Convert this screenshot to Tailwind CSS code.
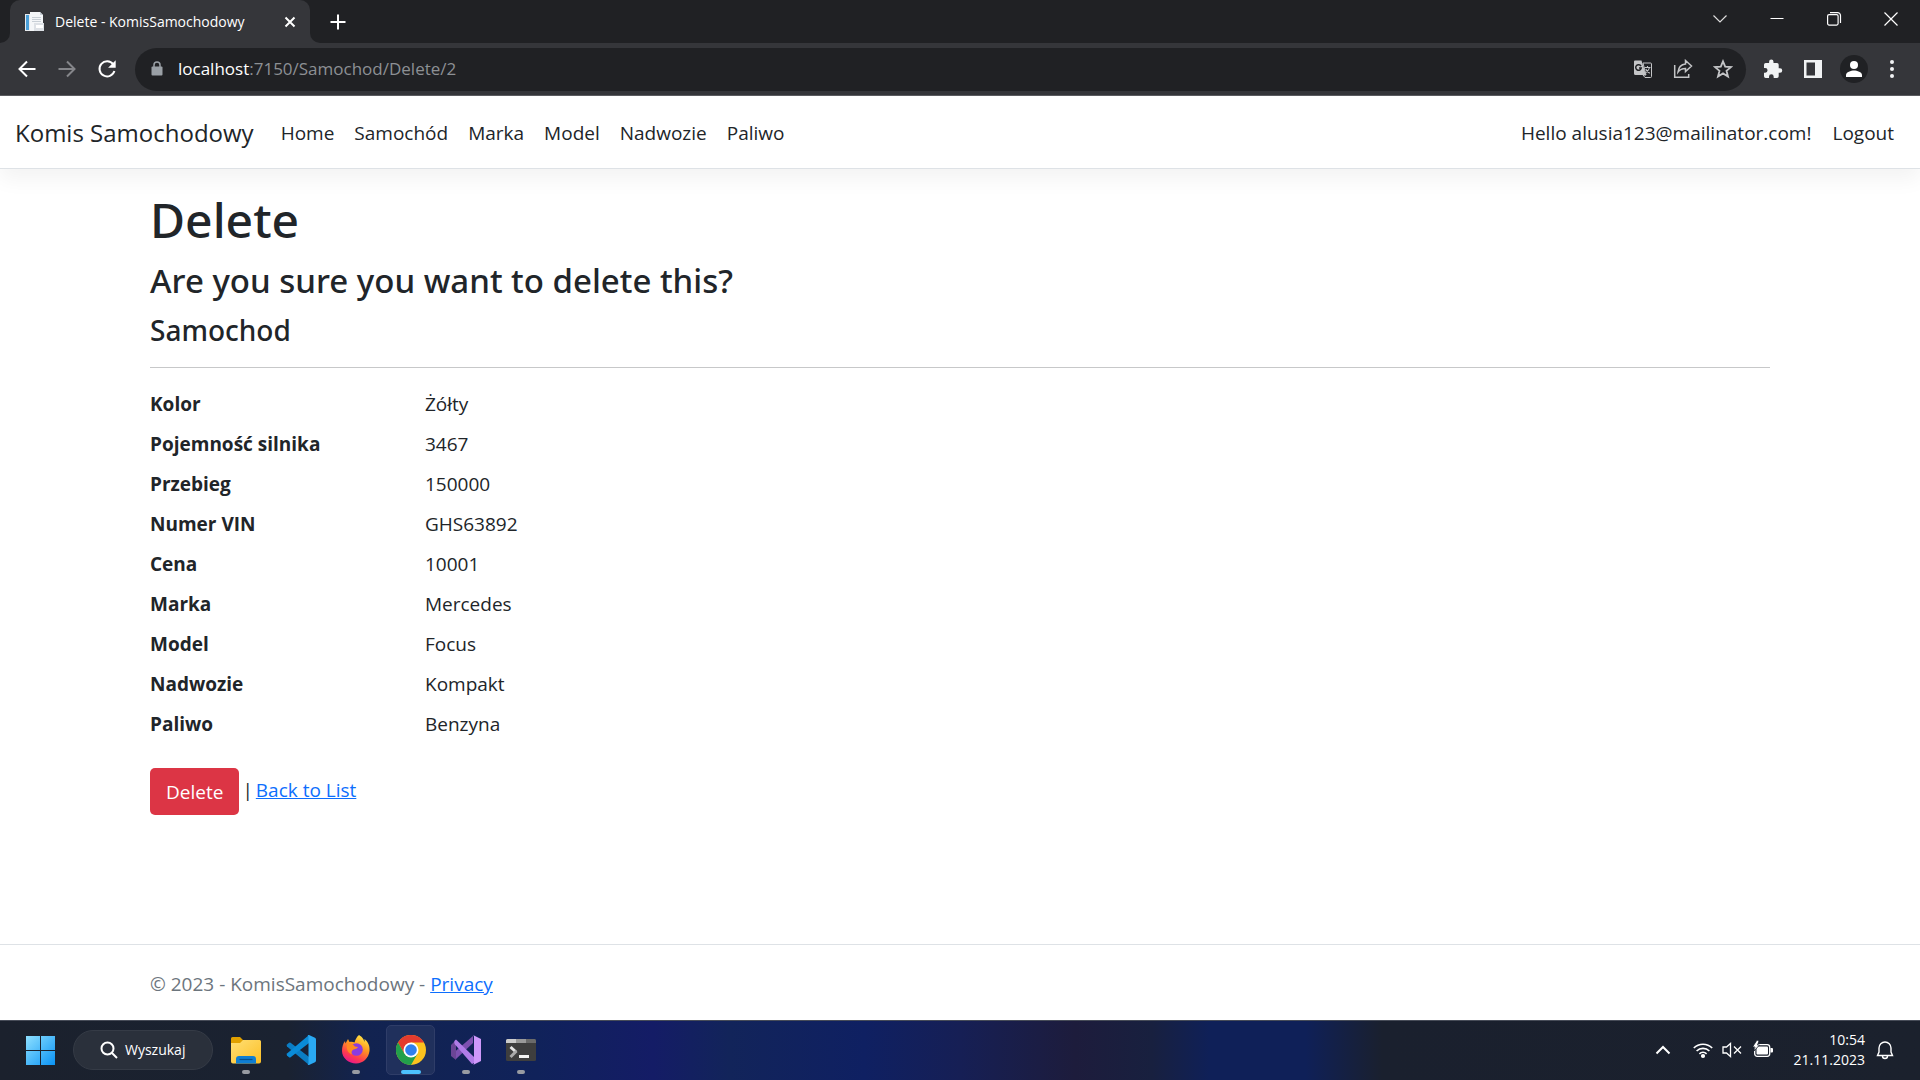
<!DOCTYPE html>
<html lang="pl">
<head>
<meta charset="utf-8">
<title>Delete - KomisSamochodowy</title>
<script src="https://cdn.jsdelivr.net/npm/@tailwindcss/browser@4"></script>
</head>
<body class="flex min-h-screen flex-col bg-white font-['Open_Sans',sans-serif] text-[19px] leading-[30px] text-[#212529]">

<!-- Browser tabs -->
<div class="flex h-[43px] justify-between bg-[#202124] text-white">
  <div class="flex">
    <div class="flex w-[10px] items-end bg-[#35363a]"><div class="h-full w-full rounded-br-[10px] bg-[#202124]"></div></div>
    <div class="flex w-[300px] items-center rounded-t-[10px] bg-[#35363a] pr-[14px] pl-[14px]">
      <svg class="h-5 w-5" viewBox="0 0 20 20"><path d="M1 2h12v17H1z" fill="#e8ebee"/><path d="M2 3h3v15H2z" fill="#4a9fd8"/><path d="M6 0h10l3 3v16H6z" fill="#f4f6f8"/><path d="M16 0l3 3h-3zM8 5h9v1H8zM8 7h9v1H8zM8 9h9v1H8z" fill="#c8cfd6"/><path d="M10 11h10v8H10z" fill="#dde1e6"/><path d="M12 13h7v3h-7z" fill="#fff"/></svg>
      <span class="ml-[11px] flex-1 text-[14px]">Delete - KomisSamochodowy</span>
      <button aria-label="Close tab"><svg class="h-3 w-3" viewBox="0 0 12 12" stroke="#fff" stroke-width="2"><path d="M1.500 1.500l9 9M10.500 1.500l-9 9"/></svg></button>
    </div>
    <div class="w-[10px] bg-[#35363a]"><div class="h-full w-full rounded-bl-[10px] bg-[#202124]"></div></div>
    <button aria-label="New tab" class="ml-[10px]"><svg class="h-4 w-4" viewBox="0 0 16 16" stroke="#fff" stroke-width="2"><path d="M8 .5v15M.5 8h15"/></svg></button>
  </div>
  <div class="flex h-[37px] items-center">
    <button aria-label="Search tabs" class="flex w-[57px] justify-center"><svg class="h-4 w-4" viewBox="0 0 16 16" fill="none" stroke="#ddd" stroke-width="1.200"><path d="M1.500 4.500L8 11l6.500-6.500"/></svg></button>
    <button aria-label="Minimize" class="flex w-[57px] justify-center"><svg class="h-4 w-4" viewBox="0 0 16 16" stroke="#fff"><path d="M1.500 7.500h13"/></svg></button>
    <button aria-label="Restore" class="flex w-[57px] justify-center"><svg class="h-4 w-4" viewBox="0 0 16 16" fill="none" stroke="#fff" stroke-width="1.200"><rect x="1.600" y="3.600" width="10.500" height="10.500" rx="1.500"/><path d="M4 1.600h7.500a3 3 0 013 3V12"/></svg></button>
    <button aria-label="Close" class="flex w-[58px] justify-center"><svg class="h-4 w-4" viewBox="0 0 16 16" stroke="#fff" stroke-width="1.200"><path d="M1.500 1.500l13 13M14.500 1.500l-13 13"/></svg></button>
  </div>
</div>

<!-- Browser toolbar -->
<div class="flex h-[53px] items-center border-b border-[#5b5c60] bg-[#35363a] pr-5 pl-[17px]">
  <button aria-label="Back" class="w-10"><svg class="h-5 w-5" viewBox="0 0 20 20" fill="none" stroke="#fff" stroke-width="2"><path d="M18.500 10H3M10 2.500L2.500 10l7.500 7.500"/></svg></button>
  <button aria-label="Forward" class="w-10"><svg class="h-5 w-5" viewBox="0 0 20 20" fill="none" stroke="#85868a" stroke-width="2"><path d="M1.500 10H17M10 2.500l7.500 7.500-7.500 7.500"/></svg></button>
  <button aria-label="Reload" class="w-[38px]"><svg class="h-5 w-5" viewBox="0 0 20 20" fill="none"><path d="M16.200 5.200A7.600 7.600 0 1017.400 12" stroke="#fff" stroke-width="2"/><path d="M18.700 1.200v7.600h-7.600z" fill="#fff"/></svg></button>
  <div class="flex h-[43px] flex-1 items-center rounded-full bg-[#202124] pr-[13px] pl-[16px]">
    <svg class="h-4 w-3" viewBox="0 0 12 16"><rect x=".5" y="5.500" width="11" height="9" rx="1" fill="#9aa0a6"/><path d="M3 6V4a3 3 0 016 0v2" fill="none" stroke="#9aa0a6" stroke-width="1.500"/></svg>
    <span class="ml-[15px] flex-1 text-[17px] text-[#8d9094]"><span class="text-white">localhost</span>:7150/Samochod/Delete/2</span>
    <div class="flex items-center gap-5">
      <button aria-label="Translate"><svg class="h-5 w-5" viewBox="0 0 20 20"><path d="M2 1.500h6.500L13 16H2.500A1.500 1.500 0 011 14.500v-12A1 1 0 012 1.500z" fill="#c4c5c7"/><path d="M10 4h7.500a1 1 0 011 1v12.500a1 1 0 01-1 1H12l-2-2.500h3z" fill="none" stroke="#c4c5c7"/><path d="M8 7.200A2.800 2.800 0 108.300 9H6" fill="none" stroke="#202124" stroke-width="1.500"/><path d="M11.500 8.500h6M14.500 7v1.500M16.500 8.500c-.5 2.500-2 4-3.500 5M12.800 10c.7 1.800 2.200 3.400 4 4.200" fill="none" stroke="#c4c5c7" stroke-width="1.100"/></svg></button>
      <button aria-label="Share"><svg class="h-5 w-5" viewBox="0 0 20 20" fill="none" stroke="#c4c5c7" stroke-width="1.500"><path d="M1.700 6v12.300h14V15"/><path d="M12.500 1.500l6 5.500-6 5.500V9.500c-3.500 0-5.700 1-7.500 3.500.5-4.500 3-7.500 7.500-8z"/></svg></button>
      <button aria-label="Bookmark"><svg class="h-5 w-5" viewBox="0 0 20 20" fill="none" stroke="#c4c5c7" stroke-width="1.800"><path d="M10 2.300l2.200 5.400 5.800.4-4.500 3.700 1.500 5.700L10 14.400l-5 3.100 1.500-5.700L2 8.100l5.800-.4z"/></svg></button>
    </div>
  </div>
  <div class="ml-[17px] flex items-center">
    <button aria-label="Extensions" class="w-10"><svg class="h-5 w-5" viewBox="0 0 20 20"><path d="M17 9.300h-1.300V5.700a1.700 1.700 0 00-1.700-1.700h-3.500V2.800a2.200 2.200 0 00-4.400 0V4H2.700A1.700 1.700 0 001 5.700V9h1.200a2.300 2.300 0 010 4.700H1v3.600A1.700 1.700 0 002.700 19H6v-1.300a2.300 2.300 0 014.700 0V19H14a1.700 1.700 0 001.700-1.700v-3.500H17a2.200 2.200 0 000-4.500z" fill="#f1f3f4"/></svg></button>
    <button aria-label="Side panel" class="w-[37px]"><svg class="h-5 w-5" viewBox="0 0 20 20"><path d="M1 1h18v18H1zM3.500 3.500v13h8.500v-13z" fill="#f1f3f4" fill-rule="evenodd"/></svg></button>
    <button aria-label="Profile" class="w-[44px]"><svg class="h-7 w-7" viewBox="0 0 28 28"><circle cx="14" cy="14" r="14" fill="#202124"/><circle cx="14" cy="10" r="4" fill="#fff"/><path d="M6 22v-2c0-3 5-4.500 8-4.500s8 1.500 8 4.500v2z" fill="#fff"/></svg></button>
    <button aria-label="Menu"><svg class="h-5 w-4" viewBox="0 0 16 20" fill="#f1f3f4"><circle cx="8" cy="3" r="2"/><circle cx="8" cy="10" r="2"/><circle cx="8" cy="17" r="2"/></svg></button>
  </div>
</div>

<!-- Site navigation -->
<header>
  <nav class="flex h-[73px] items-center border-b border-[#dee2e6] px-[15px] pt-[2px] shadow-[0_10px_20px_rgba(0,0,0,0.05)]">
    <a href="#" class="text-[24px]">Komis Samochodowy</a>
    <div class="ml-[27px] flex flex-1 gap-5">
      <a href="#">Home</a><a href="#">Samochód</a><a href="#">Marka</a><a href="#">Model</a><a href="#">Nadwozie</a><a href="#">Paliwo</a>
    </div>
    <div class="flex gap-[21px] pr-[11px]">
      <a href="#">Hello alusia123@mailinator.com!</a>
      <button>Logout</button>
    </div>
  </nav>
</header>

<main class="mx-auto w-full max-w-[1650px] flex-1 px-[15px] pt-[21px]">
  <div class="font-['Noto_Sans',sans-serif] font-medium">
    <h1 class="mb-[10px] text-[48px] leading-[60px]">Delete</h1>
    <h3 class="mb-[10px] text-[33px] leading-[42px]">Are you sure you want to delete this?</h3>
    <h4 class="text-[28px] leading-[36px]">Samochod</h4>
  </div>
  <hr class="mt-[19px] mb-[21px] border-[#c7c8c9]">
  <dl class="grid grid-cols-6 gap-x-[30px] gap-y-[10px]">
    <dt class="font-bold whitespace-nowrap">Kolor</dt><dd class="col-span-5">Żółty</dd>
    <dt class="font-bold whitespace-nowrap">Pojemność silnika</dt><dd class="col-span-5">3467</dd>
    <dt class="font-bold whitespace-nowrap">Przebieg</dt><dd class="col-span-5">150000</dd>
    <dt class="font-bold whitespace-nowrap">Numer VIN</dt><dd class="col-span-5">GHS63892</dd>
    <dt class="font-bold whitespace-nowrap">Cena</dt><dd class="col-span-5">10001</dd>
    <dt class="font-bold whitespace-nowrap">Marka</dt><dd class="col-span-5">Mercedes</dd>
    <dt class="font-bold whitespace-nowrap">Model</dt><dd class="col-span-5">Focus</dd>
    <dt class="font-bold whitespace-nowrap">Nadwozie</dt><dd class="col-span-5">Kompakt</dd>
    <dt class="font-bold whitespace-nowrap">Paliwo</dt><dd class="col-span-5">Benzyna</dd>
  </dl>
  <form class="mt-[29px] flex items-center" onsubmit="return false">
    <button class="h-[47px] rounded-[5px] bg-[#dc3545] px-4 text-white">Delete</button>
    <span class="ml-[3px] -mt-1">|</span>
    <a href="#" class="ml-[3px] -mt-1 text-[#0d6efd] underline">Back to List</a>
  </form>
</main>

<footer class="border-t border-[#dee2e6] text-[#6c757d]">
  <div class="mx-auto w-full max-w-[1650px] px-[15px] pt-6 pb-[21px] leading-[30px]">© 2023 - KomisSamochodowy - <a href="#" class="text-[#0d6efd] underline">Privacy</a></div>
</footer>

<!-- Desktop taskbar -->
<div class="flex h-[60px] items-center justify-between border-t border-[#474c58] bg-[linear-gradient(90deg,#1b212d_0%,#1a2231_15%,#122350_19%,#10225a_28%,#141c66_34%,#12245a_38%,#0f2062_45%,#161f55_50%,#1d1c3c_56%,#18203f_60%,#0f2058_63%,#0f2058_68%,#1a202e_72%,#1b212d_100%)] pr-[25px] pb-[2px] pl-[25px] text-white">
  <div class="flex items-center">
    <button aria-label="Start"><svg class="h-[30px] w-[30px]" viewBox="0 0 30 30"><defs><linearGradient id="win" x1="0" y1="0" x2="1" y2="1"><stop offset="0" stop-color="#8ee0ff"/><stop offset="1" stop-color="#0a93f5"/></linearGradient></defs><path d="M1 1h14v14H1zM16 1h14v14H16zM1 16h14v14H1zM16 16h14v14H16z" fill="url(#win)"/></svg></button>
    <button class="ml-[18px] flex h-10 w-[140px] items-center gap-[7px] rounded-full border border-[#353b46] bg-[#2a303b] pl-[26px] text-[14px]"><svg class="h-[18px] w-[18px]" viewBox="0 0 18 18" fill="none" stroke="#fff" stroke-width="2"><circle cx="7.500" cy="7.500" r="6"/><path d="M12 12l5 5"/></svg><span>Wyszukaj</span></button>
    <div class="ml-[5px] flex">
      <button aria-label="File Explorer" class="mx-[3px] flex h-[50px] w-[49px] flex-col items-center pt-[10px]">
        <svg class="h-[30px] w-[30px]" viewBox="0 0 30 30"><defs><linearGradient id="fold" x1="0" y1="0" x2="1" y2="1"><stop offset="0" stop-color="#ffdf75"/><stop offset="1" stop-color="#fcbf25"/></linearGradient></defs><path d="M0 3.500A1.500 1.500 0 011.500 2H9l3 3h17v8H0z" fill="#e0a000"/><path d="M0 8h9l3-3h16.500A1.500 1.500 0 0130 6.500v20a2 2 0 01-2 2H2a2 2 0 01-2-2z" fill="url(#fold)"/><path d="M5 28.500V24a3 3 0 013-3h14a3 3 0 013 3v4.500z" fill="#0f7ed2"/><path d="M8.500 24.500h13" stroke="#07508e" stroke-width="1.200"/></svg>
        <span class="mt-[5px] h-1 w-2 rounded-full bg-[#989ba2]"></span></button>
      <button aria-label="Visual Studio Code" class="mx-[3px] flex h-[50px] w-[49px] flex-col items-center pt-[10px]">
        <svg class="h-[30px] w-[30px]" viewBox="0 0 30 30"><path d="M1 9.500l2-1.700q.8-.5 1.600 0L23 22v8L1 11.500q-.8-1 0-2z" fill="#0b7dc4"/><path d="M1 20.500l2 1.700q.8.500 1.600 0L23 8V0L1 18.500q-.8 1 0 2z" fill="#0a8bd8"/><path d="M23 0l6 2.800q1 .6 1 1.700v21q0 1.100-1 1.700L23 30q-1 .3-1.700-.4Q22.500 30 22.500 28V2Q22.500 0 21.300.4 22 -.3 23 0z" fill="#2aa9f3"/></svg></button>
      <button aria-label="Firefox" class="mx-[3px] flex h-[50px] w-[49px] flex-col items-center pt-[10px]">
        <svg class="h-[30px] w-[30px]" viewBox="0 0 30 30"><defs><linearGradient id="ff" x1=".8" y1="0" x2=".3" y2="1"><stop offset="0" stop-color="#fff04a"/><stop offset=".4" stop-color="#ff9a1f"/><stop offset=".75" stop-color="#ff3b4e"/><stop offset="1" stop-color="#e6168f"/></linearGradient></defs><path d="M18 0c4 2.500 5 5 5.500 7 0-1 .2-2 0-3 4 3 5.500 7.500 5 12-.8 7-6.500 12.500-13.500 12.500S1 23 1 16C1 12 2 8.500 4 6l.5 2.500L7 4l1.500 3c2-.5 3.500-.3 5 .5 1-3 2-5.500 4.500-7.500z" fill="url(#ff)"/><circle cx="15.500" cy="14.500" r="6.300" fill="#8a3be0"/><path d="M6 9c3-1 6 0 8 2.500L17 12c-1 2-3 2-4.500 2.500-2 1-2.500 3-1.500 5-4-1.500-6-5-5-10.500z" fill="#ff8a22"/></svg>
        <span class="mt-[5px] h-1 w-2 rounded-full bg-[#989ba2]"></span></button>
      <button aria-label="Chrome" class="mx-[3px] flex h-[50px] w-[49px] flex-col items-center rounded-[5px] border border-[#2f3d68] bg-[#20305c] pt-[9px]">
        <svg class="h-[30px] w-[30px]" viewBox="0 0 30 30"><circle cx="15" cy="15" r="15" fill="#fcc31e"/><path d="M2 7.500A15 15 0 0128 7.500H15L8.500 18.700z" fill="#e33b2e"/><path d="M2 7.500A15 15 0 0015 30l6.500-11.200L15 15 8.500 18.700z" fill="#22a04b"/><circle cx="15" cy="15" r="7.500" fill="#fff"/><circle cx="15" cy="15" r="5.800" fill="#2f80ee"/></svg>
        <span class="mt-[5px] h-1 w-5 rounded-full bg-[#4cc2ff]"></span></button>
      <button aria-label="Visual Studio" class="mx-[3px] flex h-[50px] w-[49px] flex-col items-center pt-[10px]">
        <svg class="h-[30px] w-[30px]" viewBox="0 0 30 30"><path d="M0 10l5 3v4l-5 3z" fill="#7a4fa8"/><path d="M0 20l5 4L22 8V1z" fill="#7d50b0"/><path d="M0 10l5-5v20l-5-4z" fill="#6b4596"/><path d="M5 4.500q-3 2-1 5L21 29l2-1V22z" fill="#b17ce8"/><path d="M22 0l8 4v22l-8 4q1-.5 1-2V2q0-1.500-1-2z" fill="#cf98fb"/></svg>
        <span class="mt-[5px] h-1 w-2 rounded-full bg-[#989ba2]"></span></button>
      <button aria-label="Terminal" class="mx-[3px] flex h-[50px] w-[49px] flex-col items-center pt-[10px]">
        <svg class="h-[30px] w-[30px]" viewBox="0 0 30 30"><rect y="4" width="30" height="22" rx="1.500" fill="#3e3e3e"/><path d="M0 8V5.500A1.500 1.500 0 011.500 4H10v4z" fill="#ccc"/><path d="M10 4h10v4H10z" fill="#999"/><path d="M20 4h8.500A1.500 1.500 0 0130 5.500V8H20z" fill="#6a6a6a"/><path d="M4.500 12l5.500 5" stroke="#e6e6e6" stroke-width="3"/><path d="M10.500 16l-6 6" stroke="#aaa" stroke-width="3"/><path d="M13 20h10v3H13z" fill="#f2f2f2"/></svg>
        <span class="mt-[5px] h-1 w-2 rounded-full bg-[#989ba2]"></span></button>
    </div>
  </div>
  <div class="flex items-center">
    <svg class="h-4 w-4" viewBox="0 0 16 16" fill="none" stroke="#fff" stroke-width="2"><path d="M1.500 11.500L8 5l6.500 6.500"/></svg>
    <svg class="ml-[22px] h-5 w-5" viewBox="0 0 20 20" fill="none" stroke="#fff" stroke-width="1.600"><path d="M.8 8a13 13 0 0118.400 0M3.600 11a9 9 0 0112.800 0M6.400 13.800a5.200 5.200 0 017.200 0"/><circle cx="10" cy="16" r="1.300" fill="#fff"/></svg>
    <svg class="ml-[9px] h-5 w-5" viewBox="0 0 20 20" fill="none" stroke="#fff" stroke-width="1.300"><path d="M8.500 3.500v13L4.500 13H1V7h3.500z"/><path d="M12 6.500l7 7M19 6.500l-7 7"/></svg>
    <svg class="ml-[11px] h-5 w-5" viewBox="0 0 20 20"><rect x="1.700" y="4.700" width="15" height="11.600" rx="2.500" fill="none" stroke="#fff" stroke-width="1.300"/><rect x="3.500" y="6.500" width="11.500" height="8" rx="1" fill="#fff"/><path d="M17.500 8h1.500q1 0 1 1v2.500q0 1-1 1h-1.500z" fill="#fff"/><path d="M4 0L-.5 7H2L1 11l5.500-6H4.500L6 1z" fill="#fff" stroke="#1b212d" stroke-width=".8"/></svg>
    <div class="ml-[21px] text-right text-[14px] leading-5">10:54<br>21.11.2023</div>
    <svg class="ml-[10px] h-5 w-5" viewBox="0 0 20 20" fill="none" stroke="#fff" stroke-width="1.400"><path d="M2.500 15.500L4 12V8a6 6 0 0112 0v4l1.500 3.500z"/><path d="M7.500 16a2.500 2.500 0 005 0"/></svg>
  </div>
</div>
</body>
</html>
